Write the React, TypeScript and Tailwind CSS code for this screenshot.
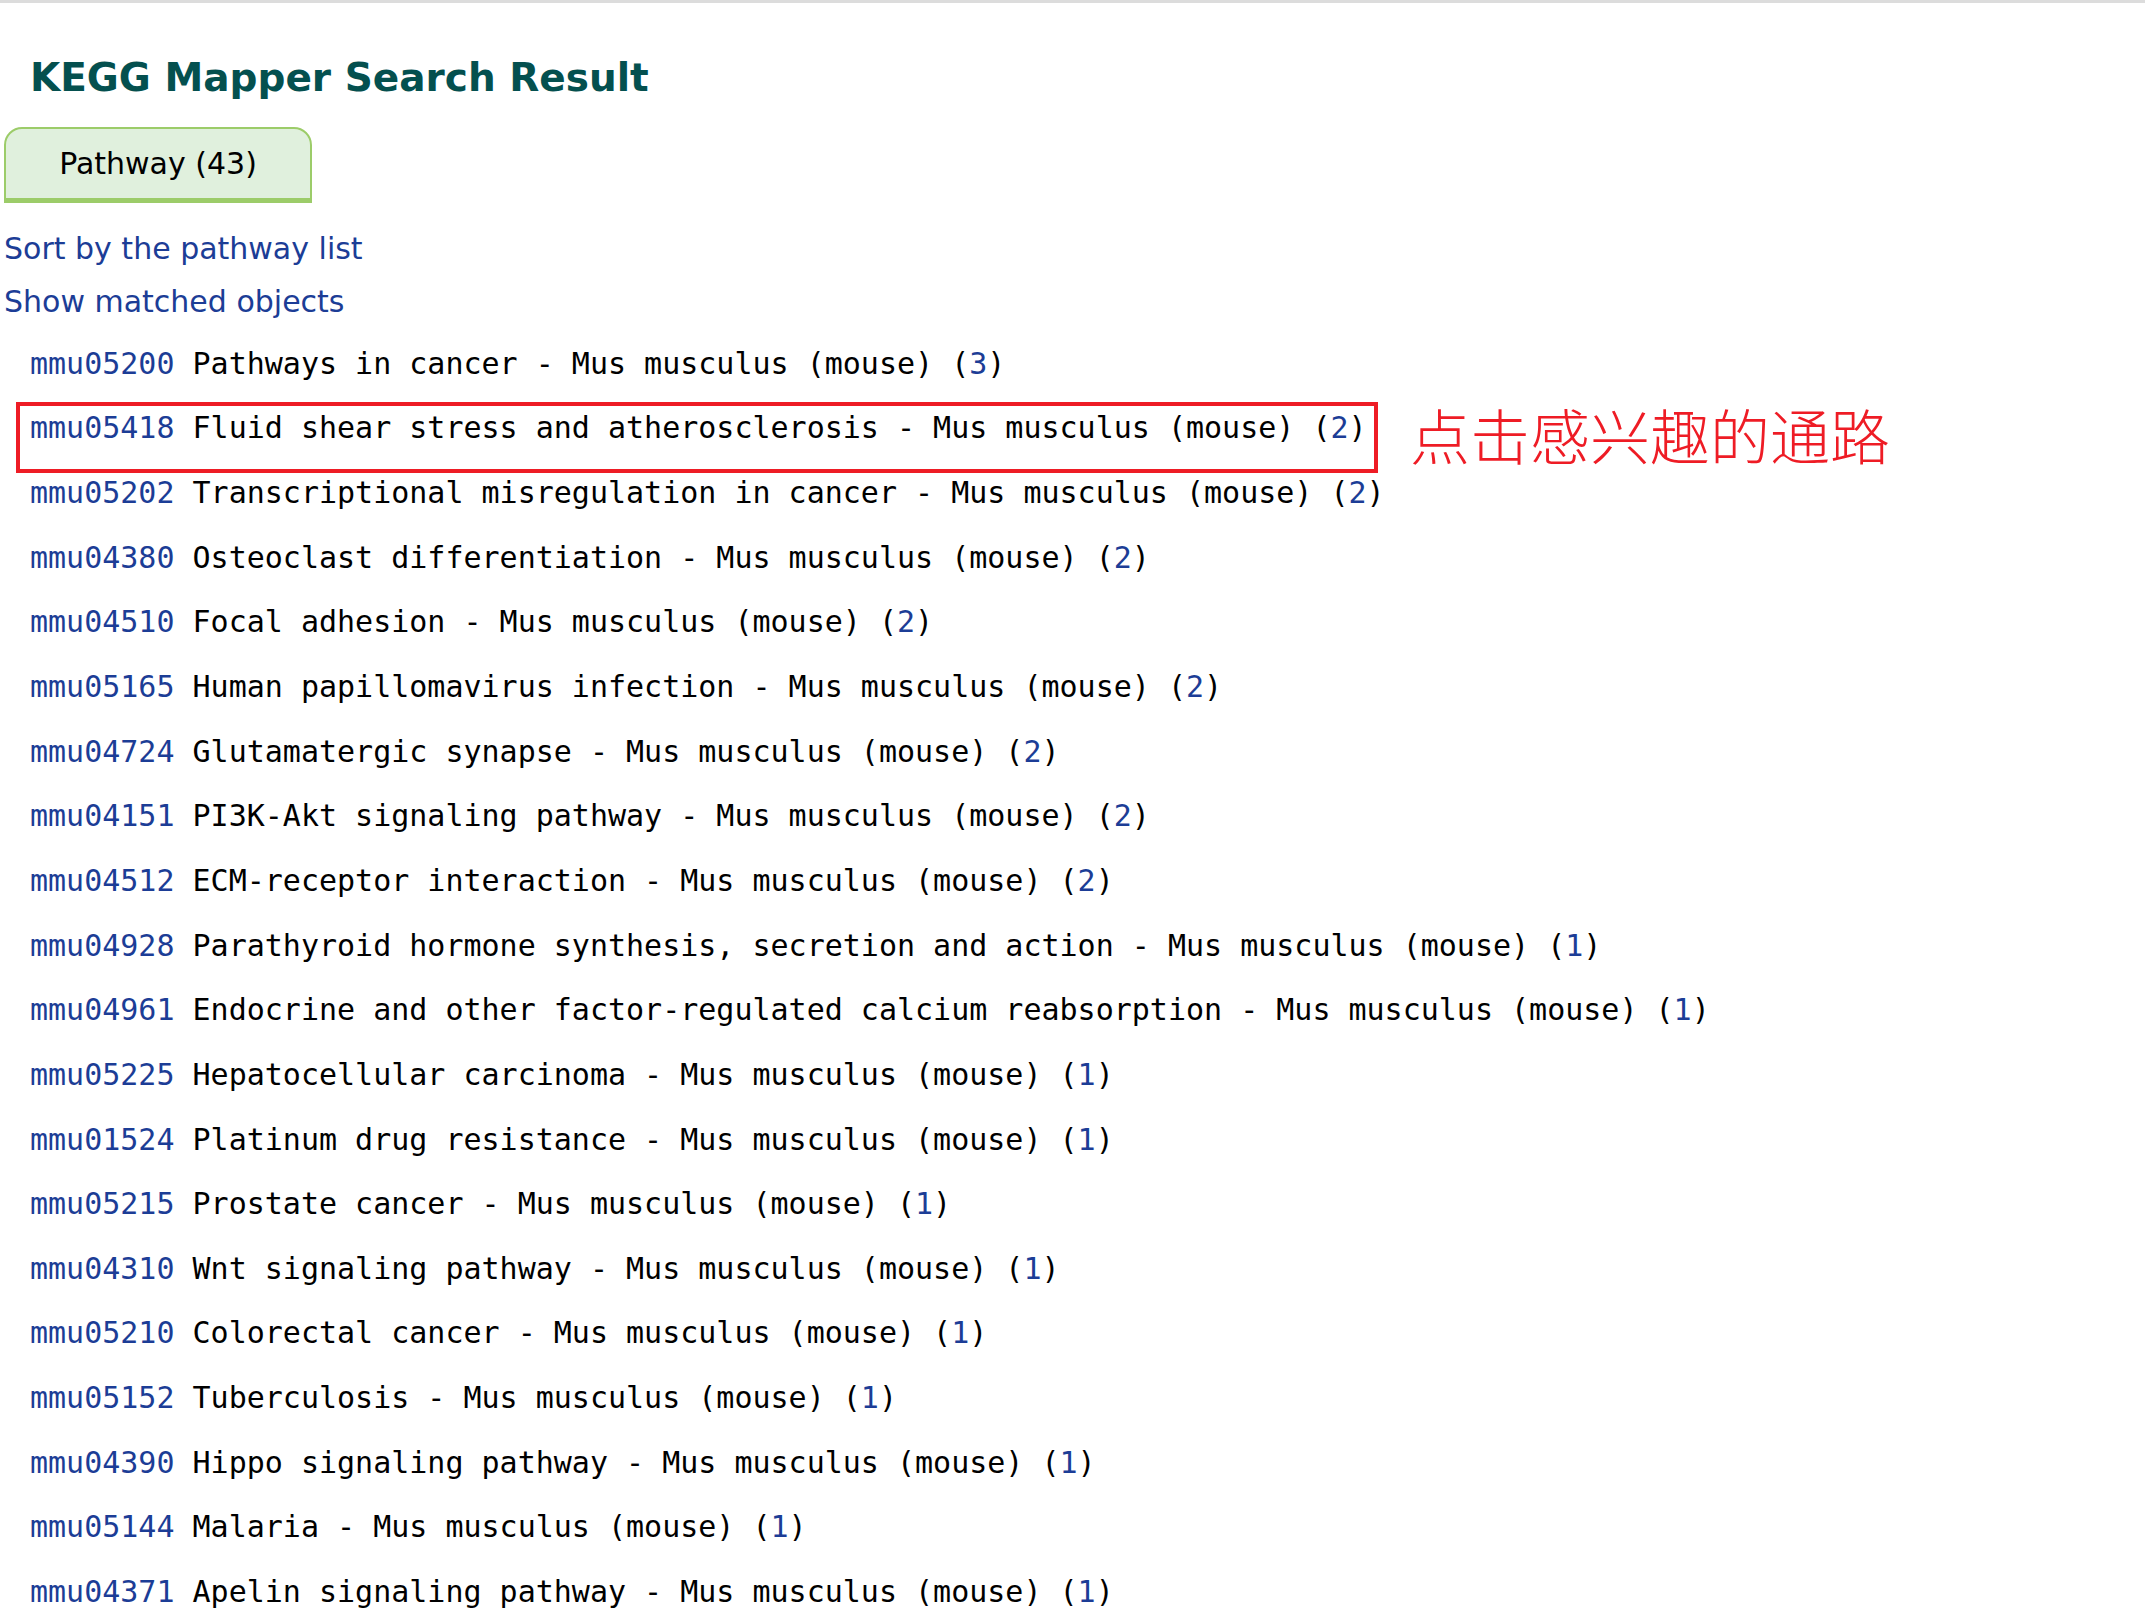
import React from 'react';

type Row = { id: string; name: string; count: number };

const ROWS: Row[] = [
    { id: 'mmu05200', name: 'Pathways in cancer', count: 3 },
    { id: 'mmu05418', name: 'Fluid shear stress and atherosclerosis', count: 2 },
    { id: 'mmu05202', name: 'Transcriptional misregulation in cancer', count: 2 },
    { id: 'mmu04380', name: 'Osteoclast differentiation', count: 2 },
    { id: 'mmu04510', name: 'Focal adhesion', count: 2 },
    { id: 'mmu05165', name: 'Human papillomavirus infection', count: 2 },
    { id: 'mmu04724', name: 'Glutamatergic synapse', count: 2 },
    { id: 'mmu04151', name: 'PI3K-Akt signaling pathway', count: 2 },
    { id: 'mmu04512', name: 'ECM-receptor interaction', count: 2 },
    { id: 'mmu04928', name: 'Parathyroid hormone synthesis, secretion and action', count: 1 },
    { id: 'mmu04961', name: 'Endocrine and other factor-regulated calcium reabsorption', count: 1 },
    { id: 'mmu05225', name: 'Hepatocellular carcinoma', count: 1 },
    { id: 'mmu01524', name: 'Platinum drug resistance', count: 1 },
    { id: 'mmu05215', name: 'Prostate cancer', count: 1 },
    { id: 'mmu04310', name: 'Wnt signaling pathway', count: 1 },
    { id: 'mmu05210', name: 'Colorectal cancer', count: 1 },
    { id: 'mmu05152', name: 'Tuberculosis', count: 1 },
    { id: 'mmu04390', name: 'Hippo signaling pathway', count: 1 },
    { id: 'mmu05144', name: 'Malaria', count: 1 },
    { id: 'mmu04371', name: 'Apelin signaling pathway', count: 1 },
];

const App: React.FC = () => {
    return (
        <div className="min-h-screen w-full bg-white border-t-[3px] border-[#dcdcdc]">
            <div className="pl-[4px] font-['DejaVu_Sans',sans-serif]">
                <h1 className="pl-[26px] pt-[50px] text-[39px] leading-[50px] font-bold text-[#04504f]">
                    KEGG Mapper Search Result
                </h1>

                {/* tab */}
                <div className="mt-[24px] w-[308px] h-[76px] rounded-t-[18px] border-2 border-b-[5px] border-[#9ccc69] bg-[#e0f0dd] flex items-center justify-center">
                    <span className="text-[30px] text-black">Pathway (43)</span>
                </div>

                <div className="mt-[19px] flex flex-col text-[30px] leading-[53px] text-[#1c3d96]">
                    <a href="#">Sort by the pathway list</a>
                    <a href="#">Show matched objects</a>
                </div>

                <ul className="mt-[3px] font-['DejaVu_Sans_Mono',monospace] text-[30px] text-black">
                    {ROWS.map((r, idx) => (
                        <li key={r.id} className="relative h-[64.65px] flex items-center pl-[26px] whitespace-pre">
                            <a href="#" className="text-[#1c3d96]">{r.id}</a>
                            <span>{' ' + r.name + ' - Mus musculus (mouse) ('}</span>
                            <a href="#" className="text-[#1c3d96]">{r.count}</a>
                            <span>)</span>
                            {idx === 1 && (
                                <>
                                    <div className="absolute left-[12px] top-[6px] w-[1362px] h-[71px] border-[4px] border-[#ee1c25]" />
                                    <span className="absolute left-[1406px] top-[0px] text-[60px] leading-[76px] text-[#ee1c25] font-light font-['Noto_Sans_CJK_SC',sans-serif]">
                                        点击感兴趣的通路
                                    </span>
                                </>
                            )}
                        </li>
                    ))}
                </ul>
            </div>
        </div>
    );
};

export default App;
